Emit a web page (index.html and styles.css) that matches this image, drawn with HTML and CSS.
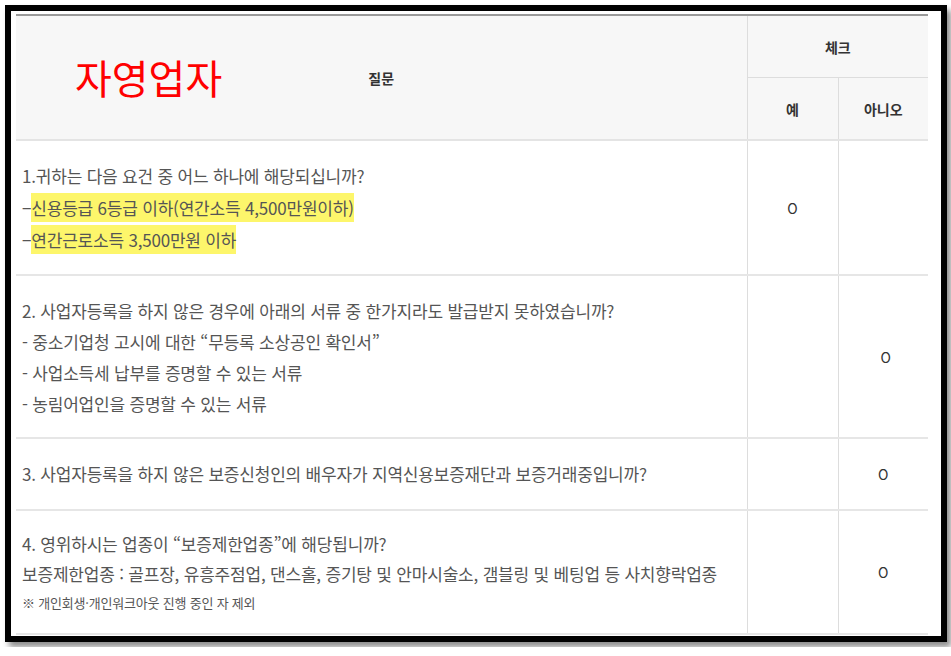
FILE: index.html
```html
<!DOCTYPE html>
<html lang="ko">
<head>
    <meta charset="UTF-8">
    <meta name="viewport" content="width=device-width, initial-scale=1.0">
    <title>자영업자 체크</title>
    <link rel="stylesheet" href="styles.css">
</head>
<body>
    <div class="frame">
        <table class="check-table">
            <colgroup>
                <col class="col-q">
                <col class="col-yes">
                <col class="col-no">
            </colgroup>
            <thead>
                <tr class="head-top">
                    <th rowspan="2" class="head-q">
                        질문
                        <span class="note">자영업자</span>
                    </th>
                    <th colspan="2">체크</th>
                </tr>
                <tr class="head-sub">
                    <th>예</th>
                    <th>아니오</th>
                </tr>
            </thead>
            <tbody>
                <tr class="row-1">
                    <td class="q">
                        <p>1.귀하는 다음 요건 중 어느 하나에 해당되십니까?</p>
                        <p>−<span class="mark">신용등급 6등급 이하(연간소득 4,500만원이하)</span></p>
                        <p>−<span class="mark">연간근로소득 3,500만원 이하</span></p>
                    </td>
                    <td class="mark-cell">O</td>
                    <td class="mark-cell"></td>
                </tr>
                <tr class="row-2">
                    <td class="q">
                        <p>2. 사업자등록을 하지 않은 경우에 아래의 서류 중 한가지라도 발급받지 못하였습니까?</p>
                        <p>- 중소기업청 고시에 대한 “무등록 소상공인 확인서”</p>
                        <p>- 사업소득세 납부를 증명할 수 있는 서류</p>
                        <p>- 농림어업인을 증명할 수 있는 서류</p>
                    </td>
                    <td class="mark-cell"></td>
                    <td class="mark-cell shift">O</td>
                </tr>
                <tr class="row-3">
                    <td class="q">
                        <p>3. 사업자등록을 하지 않은 보증신청인의 배우자가 지역신용보증재단과 보증거래중입니까?</p>
                    </td>
                    <td class="mark-cell"></td>
                    <td class="mark-cell">O</td>
                </tr>
                <tr class="row-4">
                    <td class="q">
                        <p>4. 영위하시는 업종이 “보증제한업종”에 해당됩니까?</p>
                        <p>보증제한업종 : 골프장, 유흥주점업, 댄스홀, 증기탕 및 안마시술소, 갬블링 및 베팅업 등 사치향락업종</p>
                        <p class="small">※ 개인회생·개인워크아웃 진행 중인 자 제외</p>
                    </td>
                    <td class="mark-cell"></td>
                    <td class="mark-cell">O</td>
                </tr>
            </tbody>
        </table>
    </div>
</body>
</html>
```

FILE: styles.css
```css
body { margin: 0; background: #fff; font-family: "Noto Sans CJK KR", "Noto Sans", sans-serif; }
.frame { width: 921px; margin: 5px; border: 6px solid #000; padding: 3px 4px 1px 5px; box-shadow: 4px 5px 6px rgba(0,0,0,0.45); background: #fff; }
.check-table { width: 912px; border-collapse: collapse; table-layout: fixed; border-top: 2px solid #999; }
.col-q { width: 731px; }
.col-yes { width: 91px; }
.col-no { width: 90px; }
th, td { padding: 0; }
th { background: #f7f7f7; color: #333; font-size: 14px; font-weight: bold; text-align: center; border-left: 1px solid #ddd; }
.head-q { border-left: none; position: relative; }
.head-top th { height: 61px; }
.head-sub th { height: 61px; border-top: 1px solid #ddd; }
thead tr:last-child th, .head-q { border-bottom: 2px solid #e4e4e4; }
.note { position: absolute; left: 59px; top: 41px; color: #ff0000; font-size: 40px; font-weight: normal; line-height: 1; }
td { border-bottom: 2px solid #e6e6e6; border-left: 1px solid #ddd; vertical-align: middle; }
td.q { border-left: none; padding: 0 6px; color: #555; font-size: 17px; }
.q p { margin: 0; line-height: 32px; white-space: nowrap; letter-spacing: -0.2px; }
.row-2 .q p { line-height: 31px; }
.row-4 .q p { line-height: 30px; }
.q p.small { font-size: 13px; line-height: 27px; }
.mark { background: #fdf66b; padding: 2px 0; }
.mark-cell { text-align: center; color: #333; font-size: 14px; }
.mark-cell.shift { padding-left: 5px; }
.row-1 td { height: 133px; }
.row-2 td { height: 161px; }
.row-3 td { height: 70px; }
.row-4 td { height: 122px; }
```
